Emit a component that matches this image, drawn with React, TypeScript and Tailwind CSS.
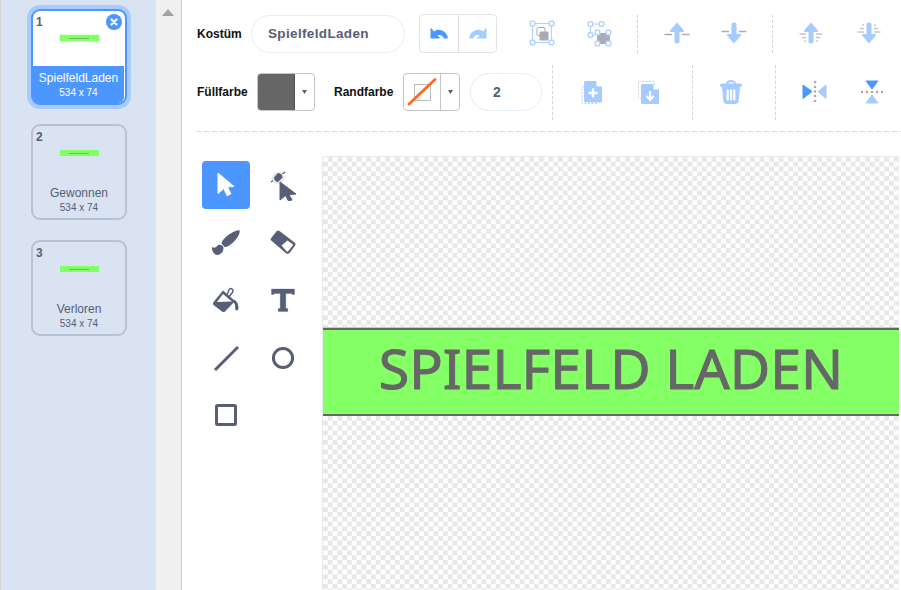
import React from "react";

const LB = "#a6ccff";
const B = "#4c97ff";
const G = "#a9abb8";
const D = "#575e75";

function Card({ n, name, selected, cls }: { n: number; name: string; selected?: boolean; cls: string }) {
  return (
    <div
      className={
        "relative w-24 h-24 rounded-[9px] border-2 shrink-0 " +
        cls +
        (selected
          ? " border-[#4c97ff] bg-white shadow-[0_0_0_4px_#a9cbfb]"
          : " border-[#b9c2d4]")
      }
    >
      <div className="absolute left-[3px] top-[4px] text-xs leading-[14px] font-bold text-[#575e75]">{n}</div>
      {selected && (
        <div className="absolute left-[73px] top-[3px] w-4 h-4 rounded-full bg-[#4c97ff] flex items-center justify-center">
          <svg width="8" height="8" viewBox="0 0 8 8">
            <path d="M1.5 1.5 L6.5 6.5 M6.5 1.5 L1.5 6.5" stroke="#fff" strokeWidth="2.2" strokeLinecap="round" />
          </svg>
        </div>
      )}
      <div className="h-[55px] flex justify-center">
        <div className={"mt-[24px] w-[39px] h-[6px] bg-[#85ff66] flex items-center justify-center " + (selected ? "shadow-[0_0_2px_#85ff66]" : "")}>
          <div className="w-[20px] h-px bg-[#76b862]" />
        </div>
      </div>
      <div
        className={
          "h-[37px] flex flex-col items-center pt-[5px] " +
          (selected ? "bg-[#4c97ff] text-white mr-[1px] rounded-b-[6px]" : "text-[#575e75]")
        }
      >
        <div className="text-xs leading-[14px]">{name}</div>
        <div className="text-[10px] leading-[12px] mt-[2px]">534 x 74</div>
      </div>
    </div>
  );
}

function VDiv({ cls }: { cls: string }) {
  return <div className={"border-l border-dashed border-[#d4d4d4] shrink-0 self-center " + cls} />;
}

function Slot({ w, children }: { w: string; children: React.ReactNode }) {
  return <div className={"flex items-center justify-center shrink-0 " + w}>{children}</div>;
}

function Handle({ x, y }: { x: number; y: number }) {
  return <rect x={x - 2.3} y={y - 2.3} width="4.6" height="4.6" rx="1.2" fill="#fff" stroke="#b4d3ff" strokeWidth="1.5" />;
}

const GroupIcon = () => (
  <svg width="28" height="28" viewBox="0 0 28 28">
    <rect x="4.5" y="4.5" width="19" height="19" fill="none" stroke="#b4d3ff" strokeWidth="1.2" />
    <rect x="9" y="8.5" width="8" height="8" rx="1" fill="#fff" stroke={G} strokeWidth="1" />
    <rect x="11.5" y="12.5" width="9" height="9" rx="1" fill={G} />
    <Handle x={4.5} y={4.5} />
    <Handle x={23.5} y={4.5} />
    <Handle x={4.5} y={23.5} />
    <Handle x={23.5} y={23.5} />
  </svg>
);

const UngroupIcon = () => (
  <svg width="28" height="28" viewBox="0 0 28 28">
    <path d="M3.5 5 H14.5 M3.5 5 V16 H8" fill="none" stroke="#b4d3ff" strokeWidth="1.2" />
    <Handle x={3.5} y={5} />
    <Handle x={14.5} y={5} />
    <Handle x={3.5} y={16} />
    <path d="M13 14 H20 L23 17 V22 L20 25 H13 L10 22 V17 Z" fill={G} />
    <Handle x={10.5} y={13.5} />
    <Handle x={21.5} y={13.5} />
    <Handle x={10.5} y={24.5} />
    <Handle x={21.5} y={24.5} />
  </svg>
);

const UpArrow = ({ flip, lines }: { flip?: boolean; lines?: boolean }) => (
  <svg width="28" height="24" viewBox="0 0 28 24" style={flip ? { transform: "scaleY(-1)" } : undefined}>
    {lines ? (
      <path
        d="M2.5 13 H9 M19 13 H25.5 M5 16.5 H9 M19 16.5 H23 M7 20 H9 M19 20 H21"
        stroke="#c5c7d0"
        strokeWidth="1.6"
        fill="none"
      />
    ) : (
      <path d="M1.5 13.5 H9 M19 13.5 H26.5" stroke={G} strokeWidth="1.6" fill="none" />
    )}
    <path
      d="M14 1.5 L21 9.5 Q21.5 11 20 11 H16.5 V20.5 Q16.5 22.5 14 22.5 Q11.5 22.5 11.5 20.5 V11 H8 Q6.5 11 7 9.5 Z"
      fill={LB}
    />
  </svg>
);

const AddIcon = () => (
  <svg width="24" height="26" viewBox="0 0 24 26">
    <rect x="3" y="8" width="15" height="16.5" fill="none" stroke="#d0d2d9" strokeWidth="1" strokeDasharray="2 1.5" />
    <path d="M5 3.5 Q5 2 6.5 2 H17 L23 8 V22 Q23 23.5 21.5 23.5 H6.5 Q5 23.5 5 22 Z" fill={LB} />
    <path d="M17.5 2 L23 7.5 H19 Q17.5 7.5 17.5 6 Z" fill="#fff" />
    <path d="M14 10.5 V17.5 M10.5 14 H17.5" stroke="#fff" strokeWidth="2.4" strokeLinecap="round" />
  </svg>
);

const DownloadIcon = () => (
  <svg width="24" height="26" viewBox="0 0 24 26">
    <rect x="1.5" y="2.5" width="16" height="17" fill="none" stroke="#d0d2d9" strokeWidth="1" strokeDasharray="2 1.5" />
    <path d="M4 6.5 Q4 5 5.5 5 H16.5 L22 10.5 V23.5 Q22 25 20.5 25 H5.5 Q4 25 4 23.5 Z" fill={LB} />
    <path d="M16.5 5 L22 10.5 H18 Q16.5 10.5 16.5 9 Z" fill="#fff" />
    <path d="M13 13 V20 M10 17.5 L13 21 L16 17.5" stroke="#fff" strokeWidth="2.1" strokeLinecap="round" strokeLinejoin="round" fill="none" />
  </svg>
);

const TrashIcon = () => (
  <svg width="24" height="26" viewBox="0 0 24 26">
    <path d="M8 5 Q8 2 12 2 Q16 2 16 5" fill="none" stroke={LB} strokeWidth="2" />
    <rect x="1" y="4.5" width="22" height="3.5" rx="1.7" fill={LB} />
    <path d="M2.8 7 H21.2 L19.6 22 Q19.2 25 16 25 H8 Q4.8 25 4.4 22 Z" fill={LB} />
    <path d="M8.7 11.5 V20.5 M12 11.5 V20.5 M15.3 11.5 V20.5" stroke="#fff" strokeWidth="2.2" strokeLinecap="round" />
  </svg>
);

const FlipH = () => (
  <svg width="26" height="24" viewBox="0 0 26 24">
    <path d="M1 5 L10 11.5 L1 18.5 Z" fill={B} stroke={B} strokeLinejoin="round" />
    <path d="M24 5 L16 11.5 L24 18.5 Z" fill={LB} stroke={LB} strokeLinejoin="round" />
    <g fill={G}>
      <circle cx="13" cy="2" r="1.3" />
      <circle cx="13" cy="7" r="1.3" />
      <circle cx="13" cy="11.5" r="1.3" />
      <circle cx="13" cy="16" r="1.3" />
      <circle cx="13" cy="21" r="1.3" />
    </g>
  </svg>
);

const FlipV = () => (
  <svg width="24" height="24" viewBox="0 0 24 24">
    <path d="M6 1 H18 L12 9 Z" fill={B} stroke={B} strokeLinejoin="round" />
    <path d="M6 23 H18 L12 15 Z" fill={LB} stroke={LB} strokeLinejoin="round" />
    <g fill={G}>
      <circle cx="2" cy="12" r="1.3" />
      <circle cx="7" cy="12" r="1.3" />
      <circle cx="12" cy="12" r="1.3" />
      <circle cx="17" cy="12" r="1.3" />
      <circle cx="22" cy="12" r="1.3" />
    </g>
  </svg>
);

const Undo = ({ color, flip }: { color: string; flip?: boolean }) => (
  <svg width="18" height="11" viewBox="0 0 18 11" style={flip ? { transform: "scaleX(-1)" } : undefined}>
    <path
      d="M0.5 1 V10 Q0.5 10.5 1 10.5 H9.5 Q10 10 9.5 9.2 L7.5 7.5 C10 6.5 12.5 7.5 13.5 9.8 Q14 10.8 15.5 10.6 H17 Q18 10.4 17.8 9 C16 2.5 8.5 -0.5 4 3.5 L1.5 0.5 Q0.8 0 0.5 1 Z"
      fill={color}
    />
  </svg>
);

const Caret = () => (
  <svg width="5" height="4" viewBox="0 0 5 4">
    <path d="M0 0 H5 L2.5 4 Z" fill="#575e75" />
  </svg>
);

function Tool({ active, children }: { active?: boolean; children: React.ReactNode }) {
  return (
    <div className={"w-12 h-12 rounded flex items-center justify-center " + (active ? "bg-[#4c97ff]" : "")}>{children}</div>
  );
}

const SelectIcon = () => (
  <svg width="18" height="26" viewBox="0 0 18 26">
    <path d="M1 1 L17 14.5 L10.5 14.8 L13.8 21.8 L10.2 23.8 L6.8 16.6 L1 21.5 Z" fill="#fff" stroke="#fff" strokeLinejoin="round" />
  </svg>
);

const ReshapeIcon = () => (
  <svg width="28" height="32" viewBox="0 0 28 32">
    <path d="M2 13 L16 3" stroke={D} strokeWidth="1.3" />
    <circle cx="9" cy="9" r="6" fill="#e3e4e8" />
    <path d="M9 4 A5 5 0 0 1 13.5 8.5 L9 13 A5 5 0 0 1 5 8.5 Z" fill={D} />
    <path d="M11 13 L27 25 L20 25.5 L23 31 L19.5 32 L16.5 26.5 L11 31 Z" fill={D} stroke={D} strokeLinejoin="round" />
  </svg>
);

const BrushIcon = () => (
  <svg width="30" height="26" viewBox="0 0 30 26">
    <path d="M28.5 0.5 C29.5 2 27 8 22 12.5 C19 15.5 15.5 17.5 13.5 17 L10.5 13.5 C11 10 15.5 6 19.5 3.5 C23 1.5 27.5 -0.5 28.5 0.5 Z" fill={D} />
    <path d="M1 17 C3 18 4.5 18 6 16 C7.5 14 10.5 14.5 12 16.5 C13.5 19 11.5 24.5 6.5 25 C3.5 25.3 0.5 21 1 17 Z" fill={D} />
  </svg>
);

const EraserIcon = () => (
  <svg width="26" height="25" viewBox="0 0 26 25">
    <path d="M6.8 1 Q8 0 9.5 1 L24.8 12.8 Q26.2 14.2 25 15.8 L20 22.5 Q18.3 24.6 16 23.3 L1.5 10.8 Q0 9.3 1.2 8 Z" fill={D} />
    <path d="M11.5 15.5 L17.5 10.5 L23.3 14.8 L18.2 21.3 Q17.5 22 16.5 21.3 Z" fill="#fff" />
  </svg>
);

const FillIcon = () => (
  <svg width="28" height="26" viewBox="0 0 28 26">
    <path d="M11 3.5 L23 14 L13 24.5 Q11.5 25.5 10 24.5 L1.5 18 Q0.3 16.5 1.5 15 Z" fill={D} />
    <path d="M11 7 L20 14.5 L5 15 Z" fill="#fff" />
    <path d="M14.5 9 L17 3 Q18 0.8 20 2 Q22 3.5 20 6 L16 11" fill="none" stroke={D} strokeWidth="1.5" />
    <path d="M22 12.5 C25 14 26.5 17 26.5 21 Q26.5 23.5 24.8 23.5 Q23 23.5 23.2 21 C23.5 18 22.5 16 20.5 14.5 Z" fill={D} />
  </svg>
);

const TextIcon = () => (
  <svg width="24" height="24" viewBox="0 0 24 24">
    <path d="M0.5 1 H23.5 V6.5 H21 V5.5 H14.8 V20.5 H16.8 V23.5 H7.2 V20.5 H9.2 V5.5 H3 V6.5 H0.5 Z" fill={D} stroke={D} strokeWidth="0.3" strokeLinejoin="round" />
  </svg>
);

export default function App() {
  return (
    <div className="w-[901px] h-[590px] overflow-hidden flex bg-white border-l border-[#d8d8d8] font-['Liberation_Sans',Arial,sans-serif]">
      {/* Costume list */}
      <div className="w-[155px] shrink-0 bg-[#d9e3f2] pt-[9px] pl-[30px] flex flex-col">
        <Card n={1} name="SpielfeldLaden" selected cls="mb-[19px]" />
        <Card n={2} name="Gewonnen" cls="mb-[20px]" />
        <Card n={3} name="Verloren" cls="" />
      </div>
      {/* Scrollbar */}
      <div className="w-[26px] shrink-0 bg-[#f0f0f0] border-r border-[#cfcfcf] pt-[9px] pl-[6px]">
        <svg width="12" height="7" viewBox="0 0 12 7" className="block">
          <path d="M6 0 L12 7 H0 Z" fill="#a3a3a3" />
        </svg>
      </div>
      {/* Editor */}
      <div className="flex-1 min-w-0 flex flex-col">
        {/* Toolbar */}
        <div className="h-[132px] shrink-0 flex flex-col pt-[15px] pl-[15px] relative">
          <div className="flex items-center h-[38px]">
            <div className="w-[54px] text-xs font-bold text-[#111]">Kostüm</div>
            <div className="w-[154px] h-[38px] rounded-full border border-[#e6edf7] pl-[16px] flex items-center text-[13.5px] font-bold tracking-[0.35px] text-[#575e75]">
              SpielfeldLaden
            </div>
            <div className="ml-[14px] h-[39px] -mt-[1px] w-[78px] flex rounded border border-[#dfe3ea]">
              <div className="w-[39px] flex items-center justify-center border-r border-[#d9dce3]">
                <Undo color={B} />
              </div>
              <div className="flex-1 flex items-center justify-center">
                <Undo color={LB} flip />
              </div>
            </div>
            <div className="ml-[15px] -mt-[3px] flex items-center">
              <Slot w="w-[59px]"><GroupIcon /></Slot>
              <Slot w="w-[59px]"><UngroupIcon /></Slot>
            </div>
            <VDiv cls="ml-[7px] h-[38px]" />
            <div className="ml-[10px] -mt-[2px] flex items-center">
              <Slot w="w-[57px]"><UpArrow /></Slot>
              <Slot w="w-[57px]"><UpArrow flip /></Slot>
            </div>
            <VDiv cls="ml-[10px] h-[38px]" />
            <div className="ml-[9px] -mt-[2px] flex items-center">
              <Slot w="w-[58px]"><UpArrow lines /></Slot>
              <Slot w="w-[58px]"><UpArrow flip lines /></Slot>
            </div>
          </div>
          <div className="flex items-center h-[38px] mt-[20px]">
            <div className="w-[60px] text-xs font-bold text-[#111]">Füllfarbe</div>
            <div className="w-[58px] h-[38px] rounded border border-[#c4c4c4] flex overflow-hidden">
              <div className="w-[37px] bg-[#666666] border-r border-[#555]" />
              <div className="flex-1 flex items-center justify-center"><Caret /></div>
            </div>
            <div className="ml-[19px] w-[69px] text-xs font-bold text-[#111]">Randfarbe</div>
            <div className="w-[57px] h-[38px] rounded border border-[#c4c4c4] flex overflow-hidden">
              <div className="w-[37px] border-r border-[#c4c4c4] flex items-center justify-center">
                <svg width="30" height="30" viewBox="0 0 30 30">
                  <rect x="7.5" y="7.5" width="16" height="16" fill="#fff" stroke="#bdbdbd" strokeWidth="1" />
                  <path d="M2 27 L28 2.5" stroke="#ff6a21" strokeWidth="2.8" strokeLinecap="round" />
                </svg>
              </div>
              <div className="flex-1 flex items-center justify-center"><Caret /></div>
            </div>
            <div className="ml-[10px] w-[72px] h-[38px] rounded-full border border-[#e6edf7] pl-[22px] flex items-center text-sm font-bold text-[#575e75]">
              2
            </div>
            <VDiv cls="ml-[10px] h-[55px]" />
            <div className="ml-[9px] flex items-center">
              <Slot w="w-[58px]"><AddIcon /></Slot>
              <Slot w="w-[58px]"><DownloadIcon /></Slot>
            </div>
            <VDiv cls="ml-[14px] h-[55px]" />
            <div className="ml-[9px]">
              <Slot w="w-[58px]"><TrashIcon /></Slot>
            </div>
            <VDiv cls="ml-[15px] h-[55px]" />
            <div className="ml-[10px] flex items-center">
              <Slot w="w-[57px]"><FlipH /></Slot>
              <Slot w="w-[57px]"><FlipV /></Slot>
            </div>
          </div>
          <div className="absolute left-[14px] right-0 bottom-0 h-px bg-[repeating-linear-gradient(90deg,#d9d9d9_0_5px,transparent_5px_8px)]" />
        </div>
        {/* Body */}
        <div className="flex-1 min-h-0 flex pl-5">
          <div className="w-[105px] shrink-0 pt-[29px] grid grid-cols-[48px_48px] gap-x-[9px] gap-y-[9.5px] content-start">
            <Tool active><SelectIcon /></Tool>
            <Tool><ReshapeIcon /></Tool>
            <Tool><BrushIcon /></Tool>
            <Tool><EraserIcon /></Tool>
            <Tool><FillIcon /></Tool>
            <Tool><TextIcon /></Tool>
            <Tool>
              <svg width="26" height="26" viewBox="0 0 26 26">
                <path d="M2 25 L25 2" stroke={D} strokeWidth="3" />
              </svg>
            </Tool>
            <Tool>
              <svg width="24" height="24" viewBox="0 0 24 24">
                <circle cx="12" cy="12" r="9.6" fill="none" stroke={D} strokeWidth="3" />
              </svg>
            </Tool>
            <Tool>
              <svg width="24" height="24" viewBox="0 0 24 24">
                <rect x="2.5" y="2.5" width="19" height="19" rx="1" fill="none" stroke={D} strokeWidth="3" />
              </svg>
            </Tool>
          </div>
          <div className="ml-[15px] mt-[24px] w-[577px] shrink-0 rounded-tl-[4px] border-t border-l border-[#e6ebf2] bg-white bg-[conic-gradient(#e8e8e8_25%,#ffffff_0_50%,#e8e8e8_0_75%,#ffffff_0)] bg-[length:9.6px_9.6px]">
            <div className="mt-[171px] h-[88px] bg-[#85ff66] border-y-2 border-[#666666] shadow-[0_-1px_0_#c9c9c9] flex items-center justify-center pb-[9px] font-['Noto_Sans',sans-serif] text-[55.5px] leading-none text-[#666666] [-webkit-text-stroke:1px_#666666]">
              SPIELFELD LADEN
            </div>
          </div>
        </div>
      </div>
    </div>
  );
}
